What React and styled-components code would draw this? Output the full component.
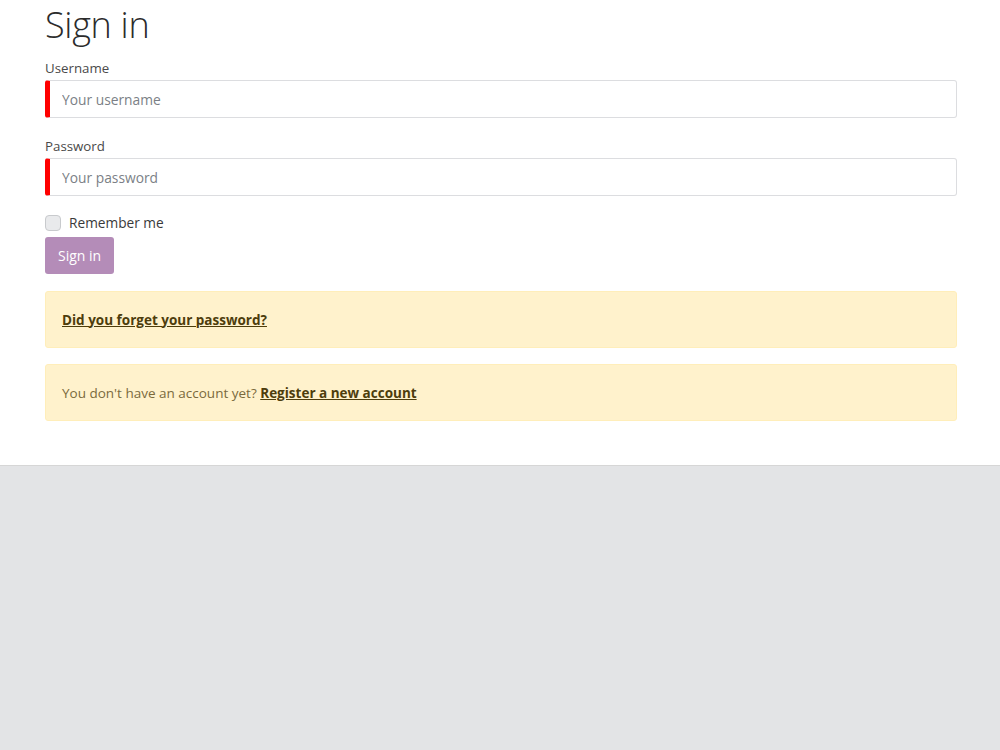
import React from "react";
import styled, { createGlobalStyle } from "styled-components";

const Global = createGlobalStyle`
  html, body { margin: 0; padding: 0; background: #e3e4e6; }
  body { font-family: "Open Sans", "Noto Sans", Arial, sans-serif; color: #333; }
  * { box-sizing: border-box; }
`;

const Section = styled.div`
  background: #fff;
  border-bottom: 1px solid #d6d6d6;
  padding: 0 43px 44px 45px;
`;

const Title = styled.h1`
  margin: 0;
  font-size: 36px;
  font-weight: 300;
  line-height: 50px;
  color: #2b2b2b;
  letter-spacing: -0.3px;
`;

const Form = styled.form`
  display: flex;
  flex-direction: column;
`;

const Field = styled.div`
  display: flex;
  flex-direction: column;
`;

const Label = styled.label`
  font-size: 13.3px;
  line-height: 20px;
  margin: ${(p) => p.$mt}px 0 2px;
  color: #4a4a4a;
`;

const Input = styled.input`
  height: 38px;
  border: 1px solid #dcdde0;
  border-left: 5px solid #ff0000;
  border-radius: 3px;
  padding: 0 12px;
  font-family: inherit;
  font-size: 13.8px;
  color: #333;
  outline: none;
  &::placeholder { color: #7b7f86; }
`;

const CheckRow = styled.label`
  display: flex;
  align-items: center;
  gap: 8px;
  margin-top: 19px;
  font-size: 13.7px;
  line-height: 16px;
  color: #3a3a3a;
`;

const Box = styled.span`
  width: 16px;
  height: 16px;
  border: 1px solid #c8cacd;
  border-radius: 4px;
  background: #e9eaec;
`;

const Button = styled.button`
  align-self: flex-start;
  margin-top: 6px;
  height: 37px;
  padding: 0 13px;
  border: none;
  border-radius: 3px;
  background: #b48cb8;
  color: #fff;
  font-family: inherit;
  font-size: 14px;
`;

const Alert = styled.div`
  margin-top: ${(p) => p.$mt}px;
  height: 57px;
  display: flex;
  align-items: center;
  padding: 0 16px;
  background: #fff2cc;
  border: 1px solid #ffeeba;
  border-radius: 3px;
  font-size: 13.5px;
  color: #7a6a3c;
`;

const Link = styled.a`
  color: #4d3d0c;
  font-weight: 700;
  text-decoration: underline;
`;

export default function App() {
  return (
    <>
      <Global />
      <Section>
        <Title>Sign in</Title>
        <Form onSubmit={(e) => e.preventDefault()}>
          <Field>
            <Label $mt={8}>Username</Label>
            <Input placeholder="Your username" />
          </Field>
          <Field>
            <Label $mt={18}>Password</Label>
            <Input type="password" placeholder="Your password" />
          </Field>
          <CheckRow>
            <Box />
            Remember me
          </CheckRow>
          <Button type="button">Sign in</Button>
        </Form>
        <Alert $mt={17}>
          <Link href="#">Did you forget your password?</Link>
        </Alert>
        <Alert $mt={16}>
          <span>
            You don't have an account yet? <Link href="#">Register a new account</Link>
          </span>
        </Alert>
      </Section>
    </>
  );
}
